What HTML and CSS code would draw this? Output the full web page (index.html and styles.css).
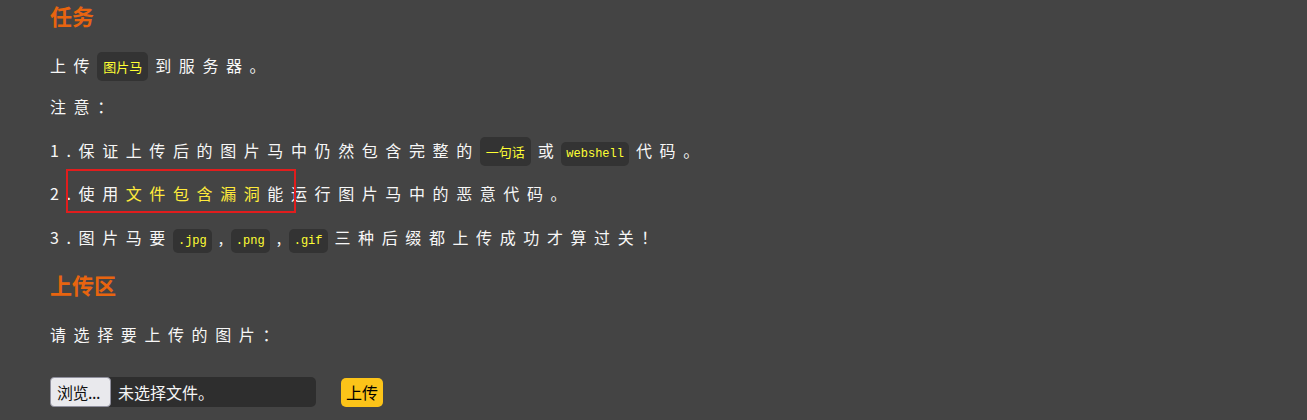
FILE: index.html
```html
<!DOCTYPE html>
<html lang="zh">
<head>
<meta charset="utf-8">
<link rel="stylesheet" href="styles.css">
</head>
<body>
<div class="page">
  <h2 class="title">任务</h2>
  <p class="line">上传<code class="tag">图片马</code>到服务器。</p>
  <p class="line">注意：</p>
  <p class="line has-code">1.保证上传后的图片马中仍然包含完整的<code class="tag">一句话</code>或<code class="tag mono">webshell</code>代码。</p>
  <p class="line marked">2.使用<span class="hl">文件包含漏洞</span>能运行图片马中的恶意代码。<span class="redbox"></span></p>
  <p class="line has-code">3.图片马要<code class="tag mono">.jpg</code>,<code class="tag mono">.png</code>,<code class="tag mono">.gif</code>三种后缀都上传成功才算过关！</p>
  <h2 class="title second">上传区</h2>
  <p class="line">请选择要上传的图片：</p>
  <div class="form">
    <div class="file">
      <span class="browse">浏览...</span>
      <span class="fname">未选择文件。</span>
    </div>
    <span class="submit">上传</span>
  </div>
</div>
</body>
</html>
```

FILE: styles.css
```css
html, body {
  margin: 0;
  padding: 0;
  background: #444444;
}
.page {
  padding: 0 0 0 50px;
  font-family: "Noto Sans CJK SC", "Noto Sans", sans-serif;
  color: #f7f7f7;
}
.title {
  margin: 0;
  font-size: 22px;
  font-weight: bold;
  color: #e8640f;
  line-height: 30px;
}
.title.second {
  margin-top: 11px;
}
.line {
  margin: 0;
  font-size: 16px;
  letter-spacing: 7.6px;
  line-height: 25px;
  padding: 8px 0;
  position: relative;
}
.line.has-code {
  margin-top: 3px;
}
.line.marked {
  margin-top: 2px;
}
.title + .line { margin-top: 15px; }
.tag {
  font-family: "Noto Sans CJK SC", sans-serif;
  font-size: 13px;
  line-height: 16px;
  letter-spacing: 0;
  color: #ffff33;
  background: #333333;
  border-radius: 5px;
  padding: 5px 6px;
  margin-right: 7px;
}
.tag.mono {
  font-family: "Liberation Mono", "DejaVu Sans Mono", monospace;
  font-size: 12px;
  padding: 5px 5px;
}
.hl { color: #ffeb3b; }
.redbox {
  position: absolute;
  left: 16px;
  top: -4px;
  width: 226px;
  height: 40px;
  border: 2px solid #e11d1d;
}
.form {
  display: flex;
  align-items: center;
  gap: 25px;
  margin-top: 22px;
  font-size: 16px;
}
.file {
  display: flex;
  width: 266px;
  height: 30px;
  background: #2e2e2e;
  border-radius: 5px;
}
.browse {
  display: flex;
  align-items: center;
  padding: 0 6px;
  width: 61px;
  background: #e9e9ed;
  color: #111;
  border: 1px solid #8f8f9d;
  border-radius: 4px;
  box-sizing: border-box;
  height: 30px;
  letter-spacing: -0.5px;
}
.fname {
  display: flex;
  align-items: center;
  padding-left: 7px;
  color: #f5f5f5;
}
.submit {
  display: flex;
  align-items: center;
  height: 29px;
  padding: 0 5px;
  background: #fcc419;
  color: #000;
  border-radius: 5px;
}
```
